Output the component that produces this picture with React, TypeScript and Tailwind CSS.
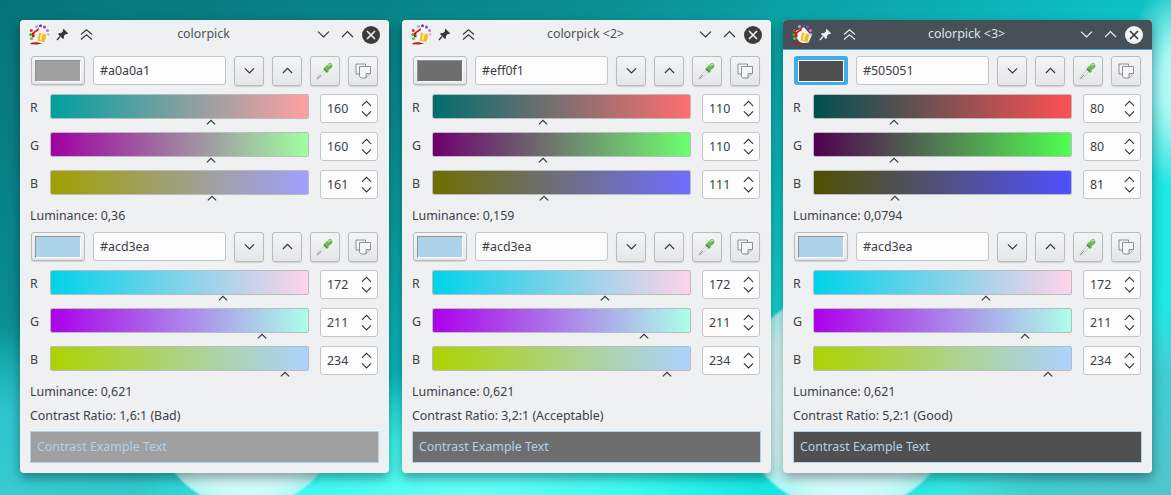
import React from "react";

const font = { fontFamily: '"Noto Sans", sans-serif' };

function Chevron({ dir, size = 10, color = "#31363b", sw = 1.2 }: { dir: "up" | "down"; size?: number; color?: string; sw?: number }) {
  const d = dir === "up" ? "M1 6.5 L6 1.5 L11 6.5" : "M1 1.5 L6 6.5 L11 1.5";
  return (
    <svg width={size} height={(size * 8) / 12} viewBox="0 0 12 8" fill="none">
      <path d={d} stroke={color} strokeWidth={sw} />
    </svg>
  );
}

function Logo() {
  return (
    <svg width="21" height="21" viewBox="0 0 21 21" className="shrink-0">
      <circle cx="7.5" cy="2.5" r="1.5" fill="#9db0dc" />
      <circle cx="11.5" cy="1.8" r="1.5" fill="#5a48b0" />
      <circle cx="15.5" cy="3" r="1.5" fill="#a840b8" />
      <circle cx="18.5" cy="6.5" r="1.5" fill="#d86ad8" />
      <circle cx="19" cy="10.5" r="1.3" fill="#e8a0e0" />
      <circle cx="2.3" cy="6.5" r="1.5" fill="#e03030" />
      <circle cx="1.8" cy="10.5" r="1.5" fill="#30b030" />
      <circle cx="2.5" cy="14.5" r="1.5" fill="#60c820" />
      <path d="M4 7 L12 3.2 L19.5 12 L16.5 18.5 L9 19.5 L4.5 14 Z" fill="#f7f5f0" />
      <path d="M3 9 L10 3.8 L9.5 6.5 L5.5 9 L5.5 13.5 L3 13 Z" fill="#cc1a1a" />
      <path d="M10 8.5 L17.5 10.5 L15.5 18 L8.5 16.5 Z" fill="#f2b92a" />
      <path d="M12 9 L14.2 9.7 L12.2 16.5 L10.5 16 Z" fill="#fde9a0" />
      <path d="M1.5 19 C6 17.5 10 18.2 13 19.6 L8 20.6 L1.5 20.2 Z" fill="#b02020" />
    </svg>
  );
}

function Pin({ color }: { color: string }) {
  return (
    <svg width="13" height="13" viewBox="0 0 13 13">
      <path d="M7.5 0.8 L12.2 5.5 L10.8 6.3 L10 5.8 L7.8 8 L8 10 L7 11 L2 6 L3 5 L5 5.2 L7.2 3 L6.7 2.2 Z" fill={color} />
      <path d="M4 8.5 L1 12" stroke={color} strokeWidth="1.3" />
    </svg>
  );
}

function DoubleUp({ color }: { color: string }) {
  return (
    <svg width="13" height="12" viewBox="0 0 13 12" fill="none">
      <path d="M1 5.5 L6.5 0.8 L12 5.5 M1 10.5 L6.5 5.8 L12 10.5" stroke={color} strokeWidth="1.1" />
    </svg>
  );
}

function Close({ active }: { active: boolean }) {
  const bg = active ? "#f3f4f4" : "#3e3c3a";
  const fg = active ? "#31363b" : "#f3f3f3";
  return (
    <svg width="18" height="18" viewBox="0 0 18 18">
      <circle cx="9" cy="9" r="9" fill={bg} />
      <path d="M5 5 L13 13 M13 5 L5 13" stroke={fg} strokeWidth="1.6" />
    </svg>
  );
}

function Dropper() {
  return (
    <svg width="20" height="20" viewBox="0 0 20 20">
      <path d="M9.5 9 L3 15.5 L2 18 L4.5 17 L11 10.5 Z" fill="#fafbfb" stroke="#a8acaf" strokeWidth="0.7" />
      <path d="M2.5 17.5 L6 14" stroke="#8a9094" strokeWidth="0.9" />
      <path d="M8.5 7.5 L12.5 11.5 L14 10 L13.5 9 L16 7.5 C18.5 5.5 17.5 2.5 15.5 2 C14 1.7 13 3 11.5 5 L10 6 Z" fill="#69b955" />
      <path d="M13 5 C14 3.2 15.5 2.8 16.5 4" stroke="#a8e794" strokeWidth="1.3" fill="none" />
      <path d="M8.8 7.8 L12.3 11.3" stroke="#3a7a32" strokeWidth="1.1" />
    </svg>
  );
}

function CopyIcon() {
  return (
    <svg width="17" height="16" viewBox="0 0 17 16" fill="#f4f5f6" stroke="#7f8489" strokeWidth="0.9">
      <path d="M1 1 H10.5 V11 H1 Z" />
      <path d="M4.5 3.5 H15.5 V10.5 L11 15 H6 L4.5 13.5 Z" />
      <path d="M15.5 10.5 H11 V15" fill="#dfe1e3" />
    </svg>
  );
}

function Btn({ children }: { children: React.ReactNode }) {
  return (
    <button className="w-[30px] h-[30px] shrink-0 flex items-center justify-center rounded-[3px] border border-[#b9bbbd] bg-[linear-gradient(#f3f4f5,#e5e6e7)] shadow-[0_1px_1px_rgba(0,0,0,0.12)]">
      {children}
    </button>
  );
}

function ColorRow({ hex, color, focus }: { hex: string; color: string; focus?: boolean }) {
  return (
    <div className="flex items-start gap-[8px] px-px h-[30px]">
      {focus ? (
        <div className="w-[54px] h-[29px] shrink-0 rounded-[3px] bg-[#3daee9] flex items-center justify-center">
          <div className="w-[46px] h-[22px] border border-white" style={{ background: color }} />
        </div>
      ) : (
        <div className="w-[54px] h-[29px] shrink-0 rounded-[3px] border border-[#b9bbbd] bg-[linear-gradient(#f3f4f5,#e5e6e7)] shadow-[0_1px_1px_rgba(0,0,0,0.12)] flex items-center justify-center">
          <div className="w-[46px] h-[22px] border border-[#8f9295] border-r-white border-b-white" style={{ background: color }} />
        </div>
      )}
      <div className="w-[133px] h-[29px] shrink-0 rounded-[3px] border border-[#c3c5c7] bg-[#fcfcfc] flex items-center pl-[6px] pt-px text-[12.4px] leading-none text-[#3b4045]">
        {hex}
      </div>
      <Btn><Chevron dir="down" size={11} sw={1.3} /></Btn>
      <Btn><Chevron dir="up" size={11} sw={1.3} /></Btn>
      <Btn><Dropper /></Btn>
      <Btn><CopyIcon /></Btn>
    </div>
  );
}

function SliderRow({ label, value, from, to }: { label: string; value: number; from: string; to: string }) {
  return (
    <div className="flex items-start h-[38px]">
      <div className="w-[20px] h-[29px] shrink-0 flex items-center text-[12.4px] leading-none text-[#3b4045]">{label}</div>
      <div className="relative w-[259px] h-[25px] shrink-0">
        <div
          className="h-[25px] rounded-[2px] border border-[#b9bbbd]"
          style={{ background: `linear-gradient(to right, ${from}, ${to})`, backgroundClip: "padding-box" }}
        />
        <div className="absolute top-[25px] -ml-[5px] flex" style={{ left: value + 1 }}>
          <Chevron dir="up" size={10} sw={1.4} />
        </div>
      </div>
      <div className="ml-[11px] mr-px w-[58px] h-[29px] shrink-0 rounded-[3px] border border-[#c3c5c7] bg-[#fcfcfc] flex items-center justify-between pl-[6px] pr-[5px] text-[12.4px] leading-none text-[#3b4045]">
        <span className="pt-px">{value}</span>
        <div className="flex flex-col gap-[3px]">
          <Chevron dir="up" size={11} sw={1.2} />
          <Chevron dir="down" size={11} sw={1.2} />
        </div>
      </div>
    </div>
  );
}

function Group({ hex, rgb, swatch, lum, focus }: { hex: string; rgb: [number, number, number]; swatch: string; lum: string; focus?: boolean }) {
  const [r, g, b] = rgb;
  return (
    <>
      <ColorRow hex={hex} color={swatch} focus={focus} />
      <div className="mt-[8px]">
        <SliderRow label="R" value={r} from={`rgb(0,${g},${b})`} to={`rgb(255,${g},${b})`} />
        <SliderRow label="G" value={g} from={`rgb(${r},0,${b})`} to={`rgb(${r},255,${b})`} />
        <SliderRow label="B" value={b} from={`rgb(${r},${g},0)`} to={`rgb(${r},${g},255)`} />
      </div>
      <div className="h-[16px] flex items-center text-[12.4px] leading-none text-[#3b4045]">Luminance: {lum}</div>
    </>
  );
}

function Win({
  title, hex, rgb, swatch, lum, ratio, active, extra,
}: {
  title: string; hex: string; rgb: [number, number, number]; swatch: string; lum: string; ratio: string; active?: boolean; extra?: string;
}) {
  const fg = active ? "#eff0f1" : "#31363b";
  return (
    <div className={`w-[369px] h-[453px] shrink-0 rounded-[4px] bg-[#eff0f1] shadow-[0_5px_12px_rgba(0,0,0,0.38)] overflow-hidden ${extra ?? ""}`}>
      <div
        className={
          active
            ? "h-[30px] flex items-center pl-[9px] pr-[9px] bg-[#475057] border-b border-[#3daee9]"
            : "h-[29px] flex items-center pl-[9px] pr-[9px] bg-[#eff0f1]"
        }
      >
        <Logo />
        <div className="ml-[4px] w-[16px] flex justify-center"><Pin color={fg} /></div>
        <div className="ml-[8px] w-[16px] flex justify-center"><DoubleUp color={fg} /></div>
        <div className="flex-1 pr-[4px] text-center text-[12.4px] leading-none" style={{ color: active ? "#dfe2e4" : "#4d5256" }}>{title}</div>
        <div className="flex items-center gap-[11px]">
          <Chevron dir="down" size={13} color={fg} sw={1.1} />
          <Chevron dir="up" size={13} color={fg} sw={1.1} />
          <div className="-ml-[3px]"><Close active={!!active} /></div>
        </div>
      </div>
      <div className={active ? "px-[10px] pt-[6px]" : "px-[10px] pt-[7px]"}>
        <Group hex={hex} rgb={rgb} swatch={swatch} lum={lum} focus={active} />
        <div className="mt-[8px]">
          <Group hex="#acd3ea" rgb={[172, 211, 234]} swatch="#acd3ea" lum="0,621" />
        </div>
        <div className="mt-[8px] h-[16px] flex items-center text-[12.4px] leading-none text-[#3b4045]">{ratio}</div>
        <div
          className="mt-[7px] h-[32px] border border-[#acd3ea] flex items-center pl-[6px] text-[12.4px] leading-none text-[#acd3ea]"
          style={{ background: swatch }}
        >
          Contrast Example Text
        </div>
      </div>
    </div>
  );
}

export default function App() {
  return (
    <div
      className="w-[1171px] h-[495px] overflow-hidden flex items-start gap-[13px] pl-[20px] pt-[20px] bg-[radial-gradient(circle_94px_at_247px_415px,#f0ffff_0%,#d4fcfc_80%,#b0f8f8_97%,transparent_100%),radial-gradient(circle_113px_at_847px_400px,#f0ffff_0%,#d4fcfc_80%,#b0f8f8_97%,transparent_100%),radial-gradient(ellipse_75px_110px_at_1195px_85px,#d4fcfc_0%,#a8f6f4_45%,transparent_100%),radial-gradient(ellipse_340px_130px_at_470px_500px,#6bfff6_0%,#3afaf2_50%,transparent_100%),radial-gradient(ellipse_260px_120px_at_700px_510px,#00dcdc_0%,transparent_100%),radial-gradient(ellipse_240px_200px_at_1180px_500px,#52c4cc_0%,#40ccd0_60%,transparent_100%),radial-gradient(ellipse_280px_190px_at_30px_515px,#3ccdd3_0%,#2cc6cc_55%,transparent_100%),linear-gradient(152deg,#067377_0%,#0a8d90_28%,#0bbcc0_52%,#1de8e4_72%,#1eeae6_84%,#6ee6e0_100%)]"
      style={font}
    >
      <Win title="colorpick" hex="#a0a0a1" rgb={[160, 160, 161]} swatch="#a0a0a1" lum="0,36" ratio="Contrast Ratio: 1,6:1 (Bad)" />
      <Win title="colorpick <2>" hex="#eff0f1" rgb={[110, 110, 111]} swatch="#6e6e6f" lum="0,159" ratio="Contrast Ratio: 3,2:1 (Acceptable)" />
      <Win title="colorpick <3>" hex="#505051" rgb={[80, 80, 81]} swatch="#505051" lum="0,0794" ratio="Contrast Ratio: 5,2:1 (Good)" active extra="-ml-px" />
    </div>
  );
}
